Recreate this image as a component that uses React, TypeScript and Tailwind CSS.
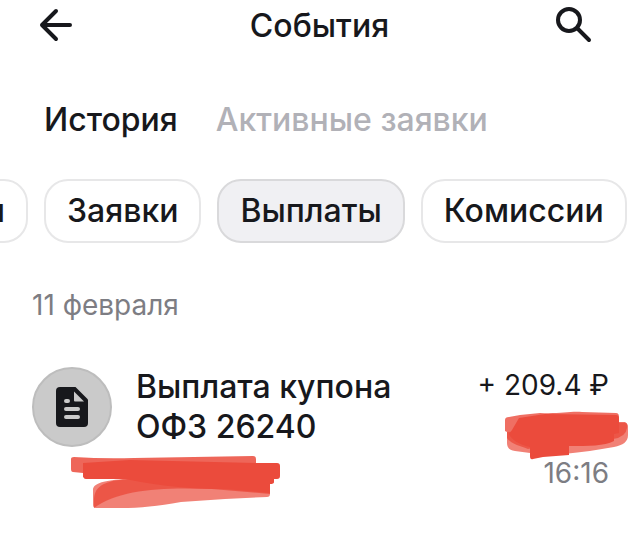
import clsx from "clsx";
import { useState } from "react";

const tabs = ["История", "Активные заявки"];
const filters = ["Сделки", "Заявки", "Выплаты", "Комиссии"];

function BackIcon() {
  return (
    <svg
      className="h-10 w-10"
      viewBox="0 0 40 40"
      fill="none"
      stroke="currentColor"
      strokeWidth="4"
      strokeLinecap="round"
      strokeLinejoin="round"
    >
      <path d="M20 5 6 19l14 14M6 19h28" />
    </svg>
  );
}

function SearchIcon() {
  return (
    <svg
      className="h-10 w-10 overflow-visible"
      viewBox="0 0 40 40"
      fill="none"
      stroke="currentColor"
      strokeWidth="4"
      strokeLinecap="round"
    >
      <circle cx="12" cy="14" r="11" />
      <path d="m20.500 22.500 11.500 11.500" />
    </svg>
  );
}

function DocumentIcon() {
  return (
    <svg className="h-10 w-8" viewBox="0 0 32 40">
      <path
        fill="#17181c"
        d="M4 0h15.500L32 12.500V36a4 4 0 0 1-4 4H4a4 4 0 0 1-4-4V4a4 4 0 0 1 4-4Z"
      />
      <path fill="#cacaca" d="M18 4.500 28 14.500H19a1 1 0 0 1-1-1Z" />
      <g stroke="#cacaca" strokeWidth="4" strokeLinecap="round">
        <path d="M10 14h2M10 22h12M10 30h12" />
      </g>
    </svg>
  );
}

function AccountMark() {
  return (
    <svg className="h-[60px] w-[212px]" viewBox="0 0 212 60" fill="#eb4b3c">
      <path
        opacity=".7"
        d="M23 39c0-6 8-9 30-11l147 5v10q0 3-3 3l-42 2-44 3c-24 4-40 6-60 6H26q-3 0-3-3Z"
      />
      <path
        opacity=".8"
        d="M24 50c0-14 8-20 34-22l142 3v12l-58-5c-50-2-92 0-118 19Z"
      />
      <path
        opacity=".85"
        d="M1 8q0-2 3-2 30 2 60 1l60-1 59-1q3 0 3 3v18H13v-4L3 21q-2 0-2-3Z"
      />
      <path d="M13 12 60 9l126 3h21q3 0 3 3v10q0 3-3 3h-3v3q0 2-4 2v9l-45-4c-30 0-60-2-100-10H16q-3 0-3-4Z" />
    </svg>
  );
}

function AmountMark() {
  return (
    <svg
      className="-mr-5 h-[52px] w-[124px] overflow-visible"
      viewBox="0 0 124 52"
      fill="#eb4b3c"
    >
      <path
        opacity=".7"
        d="M2 29l112-9h6q3 0 3 4v8c0 7-5 10-14 12-16 3-32 5-50 7l-34-1-15-2Q2 47 2 40Z"
      />
      <path
        opacity=".8"
        d="M0 17q0-3 4-3l11-2 20-2c20 1 30-2 42-1l34 1q3 0 3 4v5h6q3 1 2 6-1 9-14 11l-55 3-30 7C14 43 5 40 2 35v-6l-2-1Z"
      />
      <path d="M14 15 40 11l71 1q3 0 3 4v14l-5 1v7c-10 5-25 5-45 5v9l-26 2-10 2q-3 1-3-3V44C14 42 6 36 4 31l3-4Z" />
    </svg>
  );
}

export default function App() {
  const [tab, setTab] = useState("История"),
    [filter, setFilter] = useState("Выплаты");

  return (
    <div className="min-h-screen overflow-x-hidden bg-white font-['Inter',sans-serif] text-[#17181c]">
      <header className="flex h-[52px] items-center justify-between px-9">
        <button type="button" aria-label="Назад">
          <BackIcon />
        </button>
        <h1 className="pl-1.5 text-[32px] leading-10 font-medium">События</h1>
        <button type="button" aria-label="Поиск">
          <SearchIcon />
        </button>
      </header>

      <nav className="mt-12 flex gap-[38px] px-11">
        {tabs.map((name) => (
          <button
            key={name}
            type="button"
            onClick={() => setTab(name)}
            className={clsx(
              "text-[32px] leading-10 font-medium whitespace-nowrap",
              tab !== name && "text-[#b1b1b7]"
            )}
          >
            {name}
          </button>
        ))}
      </nav>

      <div className="mt-[39px] flex gap-4">
        {filters.map((name, i) => (
          <div
            key={name}
            className={clsx("flex shrink-0 justify-end", i === 0 && "w-7")}
          >
            <button
              type="button"
              onClick={() => setFilter(name)}
              className={clsx(
                "h-16 shrink-0 rounded-3xl border-2 px-[21px] text-[32px] leading-10 font-medium",
                filter === name
                  ? "border-[#d9d9db] bg-[#f0f0f3]"
                  : "border-[#e7e7e8] bg-white"
              )}
            >
              {name}
            </button>
          </div>
        ))}
      </div>

      <main className="mt-11 px-8">
        <h2 className="text-[28px] leading-9 text-[#7d7d83]">11 февраля</h2>
        <div className="mt-11 flex items-start gap-6">
          <div className="flex size-20 shrink-0 items-center justify-center rounded-full border-2 border-[#bdbdbd] bg-[#cacaca]">
            <DocumentIcon />
          </div>
          <div className="min-w-0 flex-1">
            <p className="text-[32px] leading-10 font-medium">
              Выплата купона
              <br />
              ОФЗ 26240
            </p>
            <div className="mt-1 -ml-[66px]">
              <AccountMark />
            </div>
          </div>
          <div className="-mr-2 flex flex-col items-end text-[28px] leading-9">
            <span className="whitespace-nowrap">+ 209.4 ₽</span>
            <AmountMark />
            <time className="text-[#7d7d83]">16:16</time>
          </div>
        </div>
      </main>
    </div>
  );
}
